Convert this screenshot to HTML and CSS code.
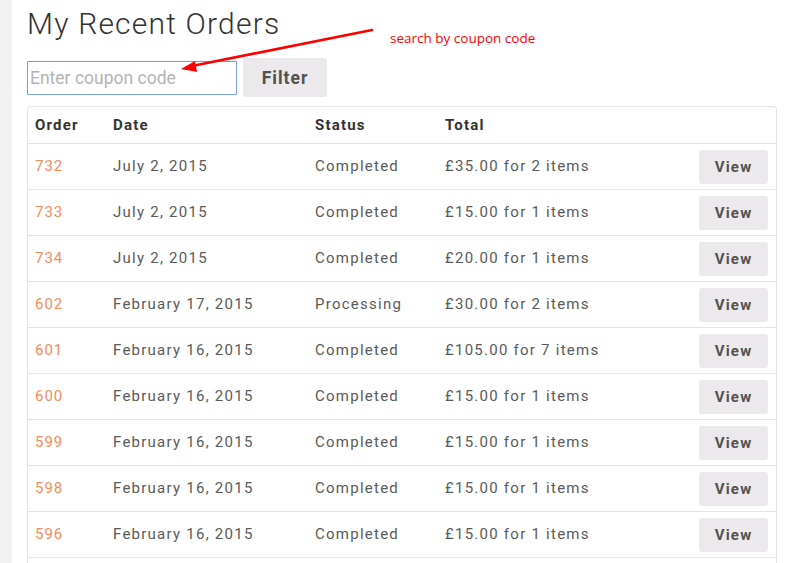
FILE: index.html
```html
<!DOCTYPE html>
<html>
<head>
<meta charset="utf-8">
<link rel="stylesheet" href="styles.css">
</head>
<body>
<div class="page">
  <aside class="side"></aside>
  <main class="main">
    <h1 class="title">My Recent Orders</h1>
    <form class="filter-form">
      <input class="coupon" type="text" placeholder="Enter coupon code">
      <button class="btn btn-filter" type="button">Filter</button>
    </form>
    <div class="orders">
      <table class="orders-table">
        <colgroup>
          <col class="c-order"><col class="c-date"><col class="c-status"><col class="c-total"><col class="c-act">
        </colgroup>
        <thead>
          <tr><th>Order</th><th>Date</th><th>Status</th><th>Total</th><th></th></tr>
        </thead>
        <tbody>
          <tr><td><a class="num">732</a></td><td>July 2, 2015</td><td>Completed</td><td>£35.00 for 2 items</td><td class="act"><button class="btn btn-view">View</button></td></tr>
          <tr><td><a class="num">733</a></td><td>July 2, 2015</td><td>Completed</td><td>£15.00 for 1 items</td><td class="act"><button class="btn btn-view">View</button></td></tr>
          <tr><td><a class="num">734</a></td><td>July 2, 2015</td><td>Completed</td><td>£20.00 for 1 items</td><td class="act"><button class="btn btn-view">View</button></td></tr>
          <tr><td><a class="num">602</a></td><td>February 17, 2015</td><td>Processing</td><td>£30.00 for 2 items</td><td class="act"><button class="btn btn-view">View</button></td></tr>
          <tr><td><a class="num">601</a></td><td>February 16, 2015</td><td>Completed</td><td>£105.00 for 7 items</td><td class="act"><button class="btn btn-view">View</button></td></tr>
          <tr><td><a class="num">600</a></td><td>February 16, 2015</td><td>Completed</td><td>£15.00 for 1 items</td><td class="act"><button class="btn btn-view">View</button></td></tr>
          <tr><td><a class="num">599</a></td><td>February 16, 2015</td><td>Completed</td><td>£15.00 for 1 items</td><td class="act"><button class="btn btn-view">View</button></td></tr>
          <tr><td><a class="num">598</a></td><td>February 16, 2015</td><td>Completed</td><td>£15.00 for 1 items</td><td class="act"><button class="btn btn-view">View</button></td></tr>
          <tr><td><a class="num">596</a></td><td>February 16, 2015</td><td>Completed</td><td>£15.00 for 1 items</td><td class="act"><button class="btn btn-view">View</button></td></tr>
          <tr class="spacer"><td></td><td></td><td></td><td></td><td></td></tr>
        </tbody>
      </table>
    </div>
  </main>
  <div class="annotation">
    <svg class="arrow" width="803" height="563" viewBox="0 0 803 563">
      <line x1="372" y1="30" x2="192" y2="66" stroke="#ff0000" stroke-width="2.6" stroke-linecap="round"/>
      <polygon points="181,69 195,61 197,72" fill="#ff0000"/>
    </svg>
    <span class="note">search by coupon code</span>
  </div>
</div>
</body>
</html>
```
FILE: styles.css
```css
html, body {
  margin: 0;
  padding: 0;
  background: #fff;
}
body {
  font-family: Roboto, "Liberation Sans", sans-serif;
  color: #555;
  overflow: hidden;
  height: 563px;
}
.page {
  display: flex;
  min-height: 563px;
  position: relative;
}
.side {
  width: 12px;
  flex: none;
  background: #f1f1f1;
}
.main {
  flex: 1;
  padding: 0 26px 0 15px;
}
.title {
  margin: 6px 0 0 0;
  font-weight: 300;
  font-size: 30px;
  line-height: 36px;
  letter-spacing: 1.2px;
  color: #333;
}
.filter-form {
  display: flex;
  align-items: center;
  gap: 6px;
  margin-top: 16px;
  height: 39px;
}
.coupon {
  box-sizing: border-box;
  width: 210px;
  height: 34px;
  border: 1px solid #7d9fe0;
  border-radius: 1px;
  padding: 0 2px;
  font-family: Roboto, sans-serif;
  font-size: 17.5px;
  color: #333;
  outline: none;
  box-shadow: 0 0 1px #a9c3f0;
}
.coupon::placeholder {
  color: #b4b4b4;
  font-weight: 400;
}
.btn {
  border: none;
  background: #ebe9eb;
  border-radius: 3px;
  color: #515151;
  font-family: Roboto, sans-serif;
  font-weight: 700;
  cursor: pointer;
}
.btn-filter {
  width: 84px;
  height: 39px;
  font-size: 17.5px;
  letter-spacing: 1px;
}
.orders {
  margin-top: 9px;
  border: 1px solid #e3e3e3;
  border-bottom: none;
  border-radius: 4px 4px 0 0;
  overflow: hidden;
}
.orders-table {
  width: 100%;
  border-collapse: collapse;
  table-layout: fixed;
}
.c-order { width: 78px; }
.c-date { width: 202px; }
.c-status { width: 130px; }
.c-total { width: auto; }
.c-act { width: 90px; }
.orders-table th {
  text-align: left;
  font-size: 15px;
  font-weight: 700;
  letter-spacing: 1.2px;
  color: #333;
  height: 36px;
  padding: 0 0 0 7px;
  vertical-align: middle;
}
.orders-table td {
  height: 46px;
  padding: 0 0 1px 7px;
  box-sizing: border-box;
  border-top: 1px solid #e3e3e3;
  font-size: 15px;
  letter-spacing: 1.25px;
  color: #5a5a5a;
  vertical-align: middle;
}
.num {
  color: #f58b5a;
  letter-spacing: 1px;
}
.orders-table td.act {
  text-align: right;
  padding-right: 8px;
  padding-bottom: 0;
}
.btn-view {
  width: 69px;
  height: 34px;
  font-size: 15px;
  letter-spacing: 1.2px;
}
.spacer td {
  height: 20px;
}
.annotation {
  position: absolute;
  left: 0;
  top: 0;
  width: 803px;
  height: 563px;
  pointer-events: none;
}
.arrow {
  position: absolute;
  left: 0;
  top: 0;
}
.note {
  position: absolute;
  left: 390px;
  top: 29px;
  font-family: "Open Sans", sans-serif;
  font-size: 13.5px;
  color: #ff0000;
}
```
